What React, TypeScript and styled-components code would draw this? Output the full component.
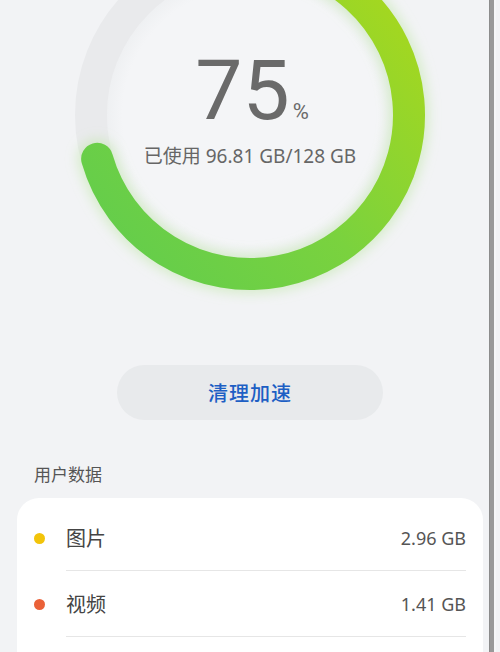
import React from "react";
import styled, { createGlobalStyle } from "styled-components";

const Global = createGlobalStyle`
  html, body { margin: 0; padding: 0; background: #f2f3f5; }
  body { font-family: "Noto Sans", "Noto Sans CJK SC", sans-serif; }
  * { box-sizing: border-box; }
`;

const Page = styled.div`
  position: relative;
  width: 500px;
  height: 652px;
  overflow: hidden;
  background: #f2f3f5;
  display: flex;
  flex-direction: column;
`;

const ScrollEdge = styled.div`
  position: absolute;
  top: 0;
  bottom: 0;
  right: 6px;
  width: 5px;
  z-index: 2;
  background: #999999;
  border-left: 1px solid #8c8c8c;
  box-shadow: 2px 0 0 #f6f7f8;
`;

const Hero = styled.div`
  display: grid;
  width: 500px;
  height: 305px;
  flex: none;
  & > * { grid-area: 1 / 1; }
`;

const RingSvg = styled.svg`
  width: 500px;
  height: 305px;
  display: block;
`;

const Center = styled.div`
  display: flex;
  flex-direction: column;
  align-items: center;
  padding-top: 49px;
  color: #6a6a6a;
`;

const Percent = styled.div`
  display: flex;
  align-items: baseline;
  line-height: 1;
  padding-left: 4px;
  font-family: Roboto, "Noto Sans", sans-serif;
`;

const Big = styled.span`
  font-size: 84px;
  font-weight: 400;
`;

const Small = styled.span`
  font-size: 22px;
  margin-left: 3px;
`;

const Used = styled.div`
  margin-top: 8px;
  font-size: 19px;
  color: #666;
`;

const CleanButton = styled.button`
  align-self: center;
  margin-top: 60px;
  width: 266px;
  height: 55px;
  flex: none;
  border: none;
  border-radius: 28px;
  background: #e8eaec;
  color: #1d5fc4;
  font-family: "Noto Sans", "Noto Sans CJK SC", sans-serif;
  font-size: 20px;
  font-weight: 500;
  letter-spacing: 1px;
  padding: 0;
`;

const SectionTitle = styled.div`
  margin: 43px 0 0 34px;
  font-size: 17px;
  color: #555;
  line-height: 24px;
`;

const Card = styled.div`
  margin: 11px 17px 0 17px;
  background: #fff;
  border-radius: 22px;
  padding-top: 7px;
  padding-bottom: 60px;
  flex: none;
`;

const Row = styled.div`
  display: flex;
  align-items: center;
  height: 66px;
  padding-left: 17px;
  padding-right: 17px;
`;

const Dot = styled.span<{ $color: string }>`
  width: 11px;
  height: 11px;
  border-radius: 50%;
  background: ${(p) => p.$color};
  flex: none;
  margin-right: 21px;
`;

const RowBody = styled.div`
  flex: 1;
  height: 100%;
  display: flex;
  align-items: center;
  justify-content: space-between;
  border-bottom: 1px solid #e6e6e6;
`;

const Label = styled.span`
  font-size: 20px;
  color: #444;
`;

const Value = styled.span`
  font-size: 18px;
  color: #555;
`;

const rows = [
  { label: "图片", value: "2.96 GB", color: "#f2c40a" },
  { label: "视频", value: "1.41 GB", color: "#ea6138" },
];

function Ring() {
  const cx = 250;
  const cy = 115;
  const r = 159;
  const a0 = (-90 * Math.PI) / 180;
  const a1 = (164 * Math.PI) / 180;
  const x0 = cx + r * Math.cos(a0);
  const y0 = cy + r * Math.sin(a0);
  const x1 = cx + r * Math.cos(a1);
  const y1 = cy + r * Math.sin(a1);
  const d = `M ${x0} ${y0} A ${r} ${r} 0 1 1 ${x1} ${y1}`;
  return (
    <RingSvg viewBox="0 0 500 305">
      <defs>
        <linearGradient id="g" x1="90" y1="280" x2="420" y2="0" gradientUnits="userSpaceOnUse">
          <stop offset="0" stopColor="#5fcc4e" />
          <stop offset="0.5" stopColor="#7ad23e" />
          <stop offset="1" stopColor="#a9d81c" />
        </linearGradient>
        <filter id="glow" x="-20%" y="-20%" width="140%" height="140%">
          <feGaussianBlur stdDeviation="6" />
        </filter>
        <radialGradient id="inner" cx="250" cy="115" r="150" gradientUnits="userSpaceOnUse">
          <stop offset="0.85" stopColor="#f4f5f7" />
          <stop offset="1" stopColor="#eceef0" />
        </radialGradient>
      </defs>
      <circle cx={cx} cy={cy} r={143} fill="url(#inner)" />
      <circle cx={cx} cy={cy} r={r} fill="none" stroke="#e9eaec" strokeWidth={32} />
      <path d={d} fill="none" stroke="#b6e59a" strokeOpacity={0.45} strokeWidth={40} strokeLinecap="round" filter="url(#glow)" />
      <path d={d} fill="none" stroke="url(#g)" strokeWidth={32} strokeLinecap="round" />
    </RingSvg>
  );
}

export default function App() {
  return (
    <Page>
      <Global />
      <Hero>
        <Ring />
        <Center>
          <Percent>
            <Big>75</Big>
            <Small>%</Small>
          </Percent>
          <Used>已使用 96.81 GB/128 GB</Used>
        </Center>
      </Hero>
      <CleanButton>清理加速</CleanButton>
      <SectionTitle>用户数据</SectionTitle>
      <Card>
        {rows.map((r) => (
          <Row key={r.label}>
            <Dot $color={r.color} />
            <RowBody>
              <Label>{r.label}</Label>
              <Value>{r.value}</Value>
            </RowBody>
          </Row>
        ))}
      </Card>
      <ScrollEdge />
    </Page>
  );
}
